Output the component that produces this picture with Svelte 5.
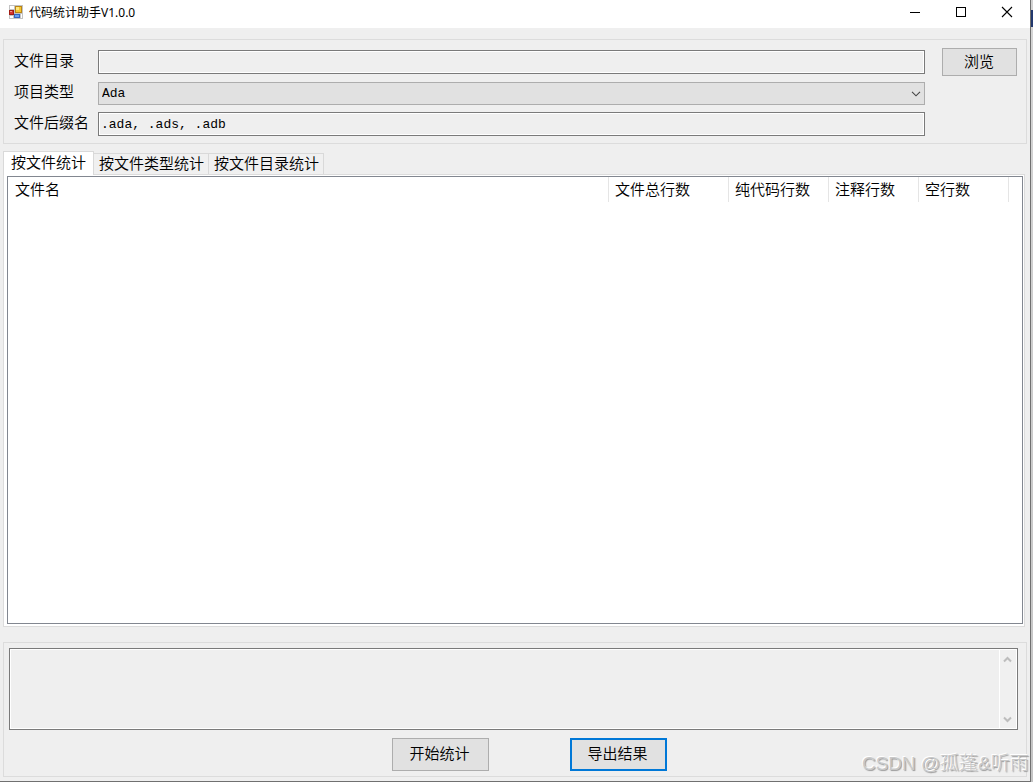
<script>
  const types = ['Ada', 'C', 'C++', 'C#', 'Java', 'Python'];
  const tabs = ['按文件统计', '按文件类型统计', '按文件目录统计'];
  const columns = [
    { name: '文件名', key: 'file' },
    { name: '文件总行数', key: 'total' },
    { name: '纯代码行数', key: 'code' },
    { name: '注释行数', key: 'comment' },
    { name: '空行数', key: 'blank' }
  ];
  let type = $state('Ada');
  let active = $state(0);
</script>

<div class="desktop">
  <div class="window">
    <header class="titlebar">
      <svg class="logo" width="14" height="14" viewBox="0 0 14 14" shape-rendering="crispEdges" aria-hidden="true">
        <rect width="14" height="14" fill="#c3c3c3" />
        <rect x="1" y="1" width="4" height="3" fill="#fff" />
        <rect x="1" y="11" width="3" height="2" fill="#fff" />
        <rect x="12" y="9" width="1" height="4" fill="#fff" />
        <rect x="0" y="5" width="5" height="5" fill="#a01c14" />
        <rect x="1" y="6" width="3" height="3" fill="#d8352c" />
        <rect x="1" y="6" width="2" height="1" fill="#f09a8c" />
        <rect x="6" y="1" width="7" height="7" fill="#b98516" />
        <rect x="7" y="2" width="5" height="5" fill="#f5c62e" />
        <rect x="7" y="2" width="3" height="3" fill="#ffe77c" />
        <rect x="5" y="9" width="6" height="4" fill="#3265bd" />
        <rect x="6" y="10" width="4" height="2" fill="#6aa0f0" />
      </svg>
      <h1>代码统计助手V1.0.0</h1>
      <button class="win" aria-label="最小化">
        <svg width="12" height="12" viewBox="0 0 12 12" shape-rendering="crispEdges"><path d="M1 6.5h10" stroke="#000" /></svg>
      </button>
      <button class="win" aria-label="最大化">
        <svg width="12" height="12" viewBox="0 0 12 12" shape-rendering="crispEdges"><path d="M1.5 1.5h9v9h-9z" fill="none" stroke="#000" /></svg>
      </button>
      <button class="win" aria-label="关闭">
        <svg width="12" height="12" viewBox="0 0 12 12"><path d="M1 1l10 10M11 1L1 11" stroke="#000" stroke-width="1.1" /></svg>
      </button>
    </header>

    <section class="group settings">
      <div class="form">
        <label for="dir">文件目录</label>
        <input id="dir" type="text" readonly />
        <label for="type">项目类型</label>
        <div class="combo">
          <select id="type" bind:value={type}>
            {#each types as t}<option>{t}</option>{/each}
          </select>
          <svg width="10" height="6" viewBox="0 0 10 6" aria-hidden="true"><path d="M1 .8l4 4 4-4" fill="none" stroke="#444" stroke-width="1.1" /></svg>
        </div>
        <label for="ext">文件后缀名</label>
        <input id="ext" type="text" readonly value=".ada, .ads, .adb" />
      </div>
      <button class="btn browse">浏览</button>
    </section>

    <div class="tabs" role="tablist">
      {#each tabs as t, i}
        <button role="tab" aria-selected={active === i} class:active={active === i} onclick={() => (active = i)}>{t}</button>
      {/each}
    </div>
    <main class="page">
      <div class="list">
        <table>
          <thead>
            <tr>
              {#each columns as c}<th class={c.key}>{c.name}</th>{/each}
              <td class="rest"></td>
            </tr>
          </thead>
        </table>
      </div>
    </main>

    <section class="group output">
      <div class="log">
        <textarea readonly aria-label="输出"></textarea>
        <div class="scroll">
          <button aria-label="向上滚动">
            <svg width="9" height="7" viewBox="0 0 9 7"><path d="M1 5.5L4.5 2 8 5.5" fill="none" stroke="#bdbdbd" stroke-width="2" /></svg>
          </button>
          <button aria-label="向下滚动">
            <svg width="9" height="7" viewBox="0 0 9 7"><path d="M1 1.5L4.5 5 8 1.5" fill="none" stroke="#bdbdbd" stroke-width="2" /></svg>
          </button>
        </div>
      </div>
      <div class="actions">
        <button class="btn">开始统计</button>
        <button class="btn primary">导出结果</button>
      </div>
    </section>
  </div>
  <div class="watermark">CSDN @孤蓬&amp;听雨</div>
</div>

<style>
  :global(body) {
    margin: 0;
  }
  * {
    box-sizing: border-box;
  }
  .desktop {
    position: relative;
    min-height: 100vh;
    display: flex;
    padding-right: 2px;
    background: linear-gradient(#d2d2d2 10px, #22386e 10px, #22386e 27px, #d4d4d4 27px, #c4c4c4);
    font: 15px/20px "Liberation Sans", "Noto Sans CJK SC", sans-serif;
    font-weight: 350;
    color: #000;
  }
  button,
  input,
  select,
  textarea {
    font: inherit;
    color: inherit;
    margin: 0;
    border-radius: 0;
    outline: none;
  }
  .window {
    flex: 1;
    min-width: 0;
    display: flex;
    flex-direction: column;
    background: #efefef;
    border: solid #707070;
    border-width: 0 1px 1px 0;
  }
  .titlebar {
    display: flex;
    align-items: center;
    height: 28px;
    padding-left: 9px;
    padding-bottom: 4px;
    background: #fff;
  }
  h1 {
    flex: 1;
    margin: 0 0 0 6px;
    padding-top: 1px;
    font: 12px/20px "Noto Sans", "Noto Sans CJK SC", sans-serif;
  }
  .win {
    display: flex;
    align-items: center;
    justify-content: center;
    width: 46px;
    height: 24px;
    padding: 0;
    border: 0;
    background: none;
  }
  .group {
    margin: 0 3px;
    border: 1px solid #dcdcdc;
  }
  .settings {
    display: flex;
    align-items: flex-start;
    gap: 17px;
    margin-top: 11px;
    padding: 8px 9px 7px 10px;
  }
  .form {
    flex: 1;
    display: grid;
    grid-template-columns: 84px 1fr;
    grid-auto-rows: 24px;
    row-gap: 7px;
    padding-top: 2px;
  }
  label {
    line-height: 22px;
    white-space: nowrap;
  }
  input {
    width: 100%;
    padding: 1px 2px 0;
    border: 1px solid #7a7a7a;
    box-shadow: inset 0 0 0 1px #fff;
    background: #efefef;
    font: 13px/20px "Liberation Mono", "Noto Sans CJK SC", monospace;
  }
  .combo {
    display: grid;
    align-items: center;
    padding-top: 1px;
  }
  .combo > * {
    grid-area: 1 / 1;
  }
  select {
    appearance: none;
    width: 100%;
    height: 23px;
    padding: 1px 3px 0;
    border: 1px solid #adadad;
    background: #e1e1e1;
    font: 13px/20px "Liberation Mono", "Noto Sans CJK SC", monospace;
  }
  .combo svg {
    justify-self: end;
    margin-right: 4px;
    pointer-events: none;
  }
  .btn {
    width: 97px;
    height: 33px;
    padding: 0 1px 1px 0;
    border: 1px solid #adadad;
    background: #e1e1e1;
  }
  .browse {
    width: 75px;
    height: 28px;
  }
  .primary {
    border: 2px solid #0078d7;
  }
  .tabs {
    display: flex;
    align-items: flex-end;
    margin: 7px 0 0 3px;
    height: 23px;
  }
  .tabs button {
    height: 21px;
    padding: 0 4px 0 5px;
    border: 1px solid #d9d9d9;
    border-width: 1px 1px 0 0;
    background: #f0f0f0;
    white-space: nowrap;
  }
  .tabs .active {
    height: 24px;
    margin-bottom: -1px;
    padding: 0 7px 1px;
    border-left-width: 1px;
    background: #fff;
    z-index: 1;
  }
  .page {
    flex: 1;
    display: flex;
    margin: 0 5px 0 3px;
    padding: 1px 1px 2px 3px;
    border: 1px solid #dcdcdc;
    background: #fff;
  }
  .list {
    flex: 1;
    border: 1px solid #828790;
    background: #fff;
  }
  table {
    width: 100%;
    table-layout: fixed;
    border-collapse: separate;
    border-spacing: 0;
  }
  th {
    height: 25px;
    padding: 0 6px;
    border-right: 1px solid #e5e5e5;
    font-weight: inherit;
    text-align: left;
    white-space: nowrap;
  }
  .file {
    padding-left: 7px;
  }
  .total {
    width: 120px;
  }
  .code {
    width: 100px;
  }
  .comment,
  .blank {
    width: 90px;
  }
  .rest {
    width: 13px;
    padding: 0;
  }
  .output {
    margin-top: 15px;
    margin-bottom: 4px;
    padding: 5px 8px 5px 5px;
  }
  .log {
    display: flex;
    height: 82px;
    padding: 1px;
    border: 1px solid #7a7a7a;
    background: #fff;
  }
  textarea {
    flex: 1;
    min-width: 0;
    padding: 2px;
    border: 0;
    resize: none;
    overflow: hidden;
    background: #efefef;
  }
  .scroll {
    width: 16px;
    margin-left: 1px;
    display: flex;
    flex-direction: column;
    justify-content: space-between;
    background: #f0f0f0;
  }
  .scroll button {
    display: flex;
    align-items: center;
    height: 18px;
    padding: 0 3px;
    border: 0;
    background: none;
  }
  .actions {
    display: flex;
    justify-content: center;
    gap: 81px;
    margin-top: 8px;
    padding-left: 31px;
  }
  .watermark {
    position: absolute;
    right: 4px;
    bottom: 4px;
    font-size: 19px;
    font-weight: 300;
    line-height: 28px;
    color: #c8c8c8;
    text-shadow: -1px -1px 0 #fff, 1px 1px 1px #999;
    white-space: nowrap;
    pointer-events: none;
  }
</style>
